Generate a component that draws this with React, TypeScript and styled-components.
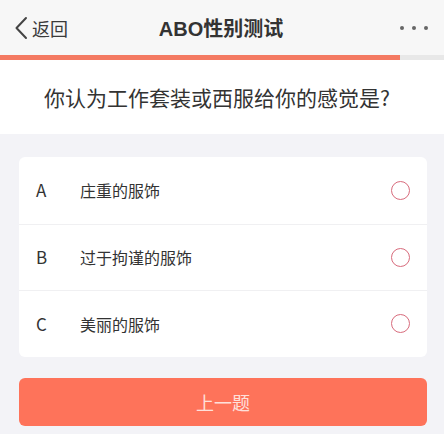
import styled, { createGlobalStyle } from 'styled-components'

const GlobalStyle = createGlobalStyle`
  html, body {
    margin: 0;
    padding: 0;
    background: #f3f3f7;
  }
  body {
    font-family: "Noto Sans CJK SC", "Noto Sans", sans-serif;
    color: #333;
  }
`

const Page = styled.div`
  width: 444px;
  height: 434px;
  display: flex;
  flex-direction: column;
  background: #f3f3f7;
  overflow: hidden;
`

const NavBar = styled.header`
  height: 55px;
  display: grid;
  grid-template-columns: 1fr auto 1fr;
  align-items: center;
  background: #f7f7f7;
  padding: 0 16px 0 14px;
  box-sizing: border-box;
`

const BackButton = styled.button`
  display: flex;
  align-items: center;
  gap: 4px;
  border: none;
  background: none;
  padding: 0;
  font-family: inherit;
  font-size: 18px;
  color: #3a3a3a;
  justify-self: start;
`

const Title = styled.h1`
  margin: 0;
  font-size: 20px;
  font-weight: 600;
  color: #333;
  font-family: "Liberation Sans", "Noto Sans CJK SC", sans-serif;
`

const MoreButton = styled.button`
  justify-self: end;
  display: flex;
  gap: 8px;
  border: none;
  background: none;
  padding: 0;
`

const Dot = styled.span`
  width: 4px;
  height: 4px;
  border-radius: 50%;
  background: #666;
`

const Track = styled.div`
  height: 5px;
  background: #e8e8e8;
`

const Fill = styled.div`
  height: 100%;
  background: #f47a62;
`

const Question = styled.h2`
  margin: 0;
  height: 74px;
  display: flex;
  align-items: center;
  justify-content: center;
  background: #fff;
  font-size: 21px;
  font-weight: 400;
  color: #333;
  padding-right: 10px;
`

const Body = styled.main`
  display: flex;
  flex-direction: column;
  gap: 21px;
  padding: 23px 17px 0 19px;
`

const Card = styled.ul`
  list-style: none;
  margin: 0;
  padding: 0;
  background: #fff;
  border-radius: 6px;
  overflow: hidden;
`

const Option = styled.li`
  height: 66.6px;
  display: flex;
  align-items: center;
  padding: 0 17px;
  box-sizing: border-box;
  & + & {
    border-top: 1px solid #f0f0f2;
  }
`

const Letter = styled.span`
  width: 44px;
  font-size: 17px;
  line-height: 24px;
  color: #333;
`

const Label = styled.span`
  flex: 1;
  font-size: 16px;
  line-height: 24px;
  color: #333;
`

const Radio = styled.span`
  width: 17px;
  height: 17px;
  border: 1.5px solid #d86b7c;
  border-radius: 50%;
`

const PrevButton = styled.button`
  height: 48px;
  border: none;
  border-radius: 6px;
  background: #fe735a;
  color: rgba(255, 255, 255, 0.8);
  font-family: inherit;
  font-size: 18px;
`

const options = [
  { key: 'A', text: '庄重的服饰' },
  { key: 'B', text: '过于拘谨的服饰' },
  { key: 'C', text: '美丽的服饰' },
]

export default function App() {
  const progress = 90

  return (
    <Page>
      <GlobalStyle />
      <NavBar>
        <BackButton>
          <svg width="14" height="24" viewBox="0 0 14 24" fill="none">
            <path d="M12 2 L2.5 12 L12 22" stroke="#444" strokeWidth="2" strokeLinecap="round" strokeLinejoin="round" />
          </svg>
          返回
        </BackButton>
        <Title>ABO性别测试</Title>
        <MoreButton>
          <Dot />
          <Dot />
          <Dot />
        </MoreButton>
      </NavBar>
      <Track>
        <Fill style={{ width: `${progress}%` }} />
      </Track>
      <Question>你认为工作套装或西服给你的感觉是?</Question>
      <Body>
        <Card>
          {options.map((o) => (
            <Option key={o.key}>
              <Letter>{o.key}</Letter>
              <Label>{o.text}</Label>
              <Radio />
            </Option>
          ))}
        </Card>
        <PrevButton>上一题</PrevButton>
      </Body>
    </Page>
  )
}
